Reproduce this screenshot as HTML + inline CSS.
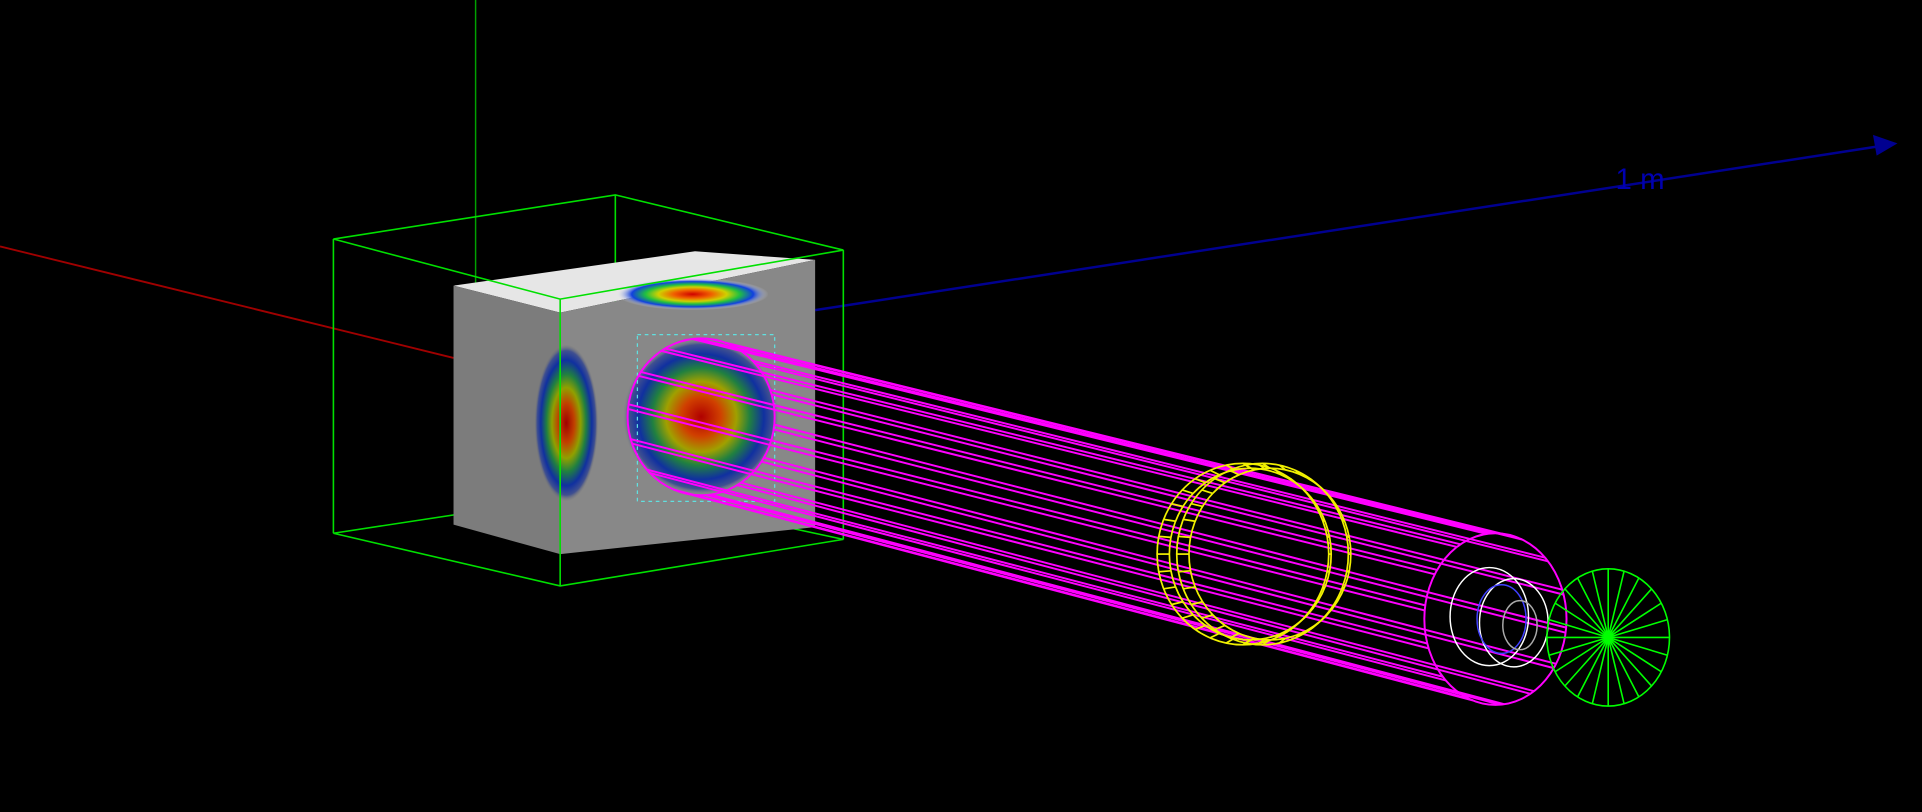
<!DOCTYPE html>
<html><head><meta charset="utf-8"><style>html,body{margin:0;padding:0;background:#000;width:1922px;height:812px;overflow:hidden}svg{display:block}</style></head>
<body>
<svg id="s" width="1922" height="812" viewBox="0 0 1568 662.4" preserveAspectRatio="none" xmlns="http://www.w3.org/2000/svg">
<defs>
<radialGradient id="hm" cx="50%" cy="50%" r="50%">
<stop offset="0" stop-color="#b00000"/><stop offset="0.25" stop-color="#d04000"/><stop offset="0.45" stop-color="#a0a000"/><stop offset="0.62" stop-color="#208040"/><stop offset="0.8" stop-color="#1030a0"/><stop offset="0.92" stop-color="#405090"/><stop offset="1" stop-color="#888" stop-opacity="0"/>
</radialGradient>
<radialGradient id="hm2" cx="50%" cy="50%" r="50%">
<stop offset="0" stop-color="#a00000"/><stop offset="0.25" stop-color="#c04000"/><stop offset="0.45" stop-color="#90a000"/><stop offset="0.62" stop-color="#208040"/><stop offset="0.8" stop-color="#1030a0"/><stop offset="0.92" stop-color="#405090"/><stop offset="1" stop-color="#777" stop-opacity="0"/>
</radialGradient>
<radialGradient id="hm3" cx="50%" cy="50%" r="50%">
<stop offset="0" stop-color="#d00000"/><stop offset="0.25" stop-color="#f06000"/><stop offset="0.45" stop-color="#d0d000"/><stop offset="0.62" stop-color="#20c040"/><stop offset="0.8" stop-color="#1040e0"/><stop offset="1" stop-color="#e6e6e6" stop-opacity="0"/>
</radialGradient>
</defs>
<rect width="1568" height="663" fill="#000"/>
<line x1="388" y1="0" x2="388" y2="232" stroke="#00a000" stroke-width="1.2"/>
<line x1="0" y1="201" x2="370" y2="292" stroke="#a00000" stroke-width="1.5"/>
<line x1="665" y1="253" x2="1535" y2="119" stroke="#000090" stroke-width="2"/>
<polygon points="1548,117 1528,110 1531,127" fill="#000090"/>
<text x="1318" y="154" font-family="Liberation Sans, sans-serif" font-size="24" fill="#0000b0">1 m</text>
<g stroke="#00e000" stroke-width="1.3" fill="none">
<polyline points="272,435 502,400 688,440"/>
<line x1="502" y1="159" x2="502" y2="400"/>
</g>
<polygon points="370,233 567,205 665,212 457,255" fill="#e6e6e6"/>
<polygon points="370,233 457,255 457,452 370,428" fill="#7c7c7c"/>
<polygon points="457,255 665,212 665,430 457,452" fill="#888"/>
<ellipse cx="565" cy="240" rx="62" ry="13" fill="url(#hm3)"/>
<ellipse cx="462" cy="345" rx="26" ry="64" fill="url(#hm2)"/>
<ellipse cx="572" cy="340" rx="64" ry="64" fill="url(#hm)"/>
<rect x="520" y="273" width="112" height="136" fill="none" stroke="#60e0e0" stroke-dasharray="3,3" stroke-width="1"/>
<g stroke="#00e000" stroke-width="1.3" fill="none">
<polygon points="272,195 502,159 688,204 457,244"/>
<line x1="272" y1="195" x2="272" y2="435"/>
<line x1="457" y1="244" x2="457" y2="478"/>
<line x1="688" y1="204" x2="688" y2="440"/>
<polyline points="272,435 457,478 688,440"/>
</g>
<g id="mag" stroke="#ff00ff" stroke-width="1.6" fill="none">
<ellipse cx="572" cy="340" rx="60" ry="64"/>
<ellipse cx="1220" cy="505" rx="58" ry="70"/>
</g>
<g id="yel" stroke="#f0f000" stroke-width="1.4" fill="none"></g>
<g stroke="#ffffff" stroke-width="1.2" fill="none">
<ellipse cx="1215" cy="503" rx="32" ry="40"/>
<ellipse cx="1235" cy="508" rx="28" ry="36"/>
<ellipse cx="1225" cy="505" rx="20" ry="28" stroke="#4040ff"/>
<ellipse cx="1240" cy="510" rx="14" ry="20" stroke="#aaa"/>
</g>
<g id="disc" stroke="#00ff00" stroke-width="1.3" fill="none">
<ellipse cx="1312" cy="520" rx="50" ry="56"/>
</g>
</svg>
<script>
var NS="http://www.w3.org/2000/svg";
function L(g,x1,y1,x2,y2){var l=document.createElementNS(NS,"line");l.setAttribute("x1",x1);l.setAttribute("y1",y1);l.setAttribute("x2",x2);l.setAttribute("y2",y2);g.appendChild(l);}
var m=document.getElementById("mag");
for(var i=0;i<14;i++){var a=i/14*2*Math.PI+0.1;
 for(var k=0;k<2;k++){var d=k*0.06;var c2=Math.cos(a+d),s2=Math.sin(a+d);
 L(m,572+60*c2,340+64*s2,1220+58*c2,505+70*s2);}}
var y=document.getElementById("yel");
[[1014,70,74],[1020,66,70],[1030,70,74],[1036,66,70]].forEach(function(e){var el=document.createElementNS(NS,"ellipse");el.setAttribute("cx",e[0]);el.setAttribute("cy",452);el.setAttribute("rx",e[1]);el.setAttribute("ry",e[2]);y.appendChild(el);});
for(var i=0;i<32;i++){var a=i/32*2*Math.PI,c=Math.cos(a),s=Math.sin(a);L(y,1014+70*c,452+74*s,1020+66*c,452+70*s);L(y,1030+70*c,452+74*s,1036+66*c,452+70*s);}
var g=document.getElementById("disc");
for(var i=0;i<12;i++){var a=i/24*2*Math.PI;L(g,1312+50*Math.cos(a),520+56*Math.sin(a),1312-50*Math.cos(a),520-56*Math.sin(a));}
</script>
</body></html>
